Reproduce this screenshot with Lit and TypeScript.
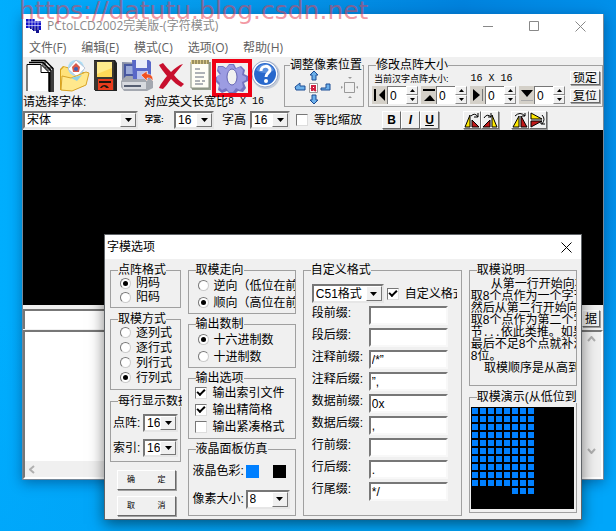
import { LitElement, html, css, svg, nothing } from "lit";
import { customElement } from "lit/decorators.js";

const toolIcons = [
  {
    name: "新建",
    art: svg`<path d="M2 3h15l9 8v21h-4V12H2z" fill="#eee"/><path d="M5 1.500h14l8 8V33M3 3.500h14l8 8V33" fill="none" stroke="#000" stroke-width="1.500"/><path d="M19 2v7h8M17 4v7h8" fill="none" stroke="#000"/><path d="M1 32V5.500h14l8 8V32z" fill="#fff"/><path d="M1 32V5.500h14l8 8V32M15 6v7.500h8" fill="none" stroke="#000"/><path d="M23.500 13v20" stroke="#000" stroke-width="2"/>`,
    w: 29,
  },
  {
    name: "打开",
    art: svg`<path d="M1 10l3-3 8 2 1 4h12v14L11 32 1 31z" fill="#d9a520"/><path d="M2 11l3-3 6 2 2 4h11v12L2 30z" fill="#ffe27a"/><circle cx="17" cy="9" r="8" fill="#a8dcf5"/><path d="M9 10l8-9 9 8-8 9z" fill="#fff" stroke="#b8c4d8"/><path d="M17 4l4 4-1 5h-6l-1-5z" fill="#d85a4a"/><circle cx="17" cy="10" r="2" fill="#3c62b8"/><path d="M2 31l1-14 9 2 15-6 3 1-3 12-14 6z" fill="#ffe88c" stroke="#d8a428"/><path d="M12 19l11-3-5 6z" fill="#8fd0e6"/>`,
    w: 31,
  },
  {
    name: "保存",
    art: svg`<path d="M0 1h21l2 3v28H1z" fill="#222"/><path d="M0 2h20v29H0z" fill="#3a3630"/><path d="M3 3h15v15H3z" fill="#ffd858"/><path d="M3 3h15v6L3 15z" fill="#ffeb8c"/><path d="M4 20h15v11H4z" fill="#e83c1c"/><path d="M5 22h12v2H5z" fill="#201810"/><path d="M6 29c2-4 7-4 9 0h-3c-1-2-3-2-4 0z" fill="#201810"/>`,
    w: 23,
  },
  {
    name: "全部保存",
    art: svg`<path d="M1 3l22 1v18H1z" fill="#8890a8"/><path d="M3 5h18v14H3z" fill="#4858a0"/><path d="M5 7h12v8H5z" fill="#9cabd8"/><path d="M0 22l5-5h24l3 5v7l-6 3H3l-3-4z" fill="#a4a8b0"/><path d="M1 23h24v7H2z" fill="#d8dadf"/><path d="M3 26h17v2H3z" fill="#555d70"/><path d="M11 1h17l2 2v17H12z" fill="#5968c8"/><path d="M15 1h11v8H15z" fill="#e8ecfa"/><path d="M16 12h11v8H16z" fill="#b8c2ec"/><path d="M20 16l6-4v3c4 0 6 2 6 7-2-3-3-3-6-3v3z" fill="#f05020" stroke="#fff" stroke-width=".5"/>`,
    w: 33,
  },
  {
    name: "删除",
    art: svg`<path d="M1 6l4-2c3 4 6 7 8 9 4-4 8-7 12-8l-9 11c3 4 6 6 10 9l-3 3c-4-2-7-5-10-8-3 4-5 7-8 10l-4-1c2-5 5-8 8-12C6 13 3 10 1 6z" fill="#c8102e"/>`,
    w: 28,
  },
  {
    name: "记事",
    art: svg`<path d="M2 3h19v28H2z" fill="#98a090"/><path d="M1 3h18v26H1z" fill="#fffef6" stroke="#889080"/><path d="M1 1h18v4H1z" fill="#d8c888"/><path d="M3 1v4M6 1v4M9 1v4M12 1v4M15 1v4M18 1v4" stroke="#605838"/><path d="M5 10h5M5 14h10M5 18h9M5 22h5M12 22h3M5 25h8" stroke="#606878"/>`,
    w: 21,
  },
];

const groupFields = [
  ["段前缀:", ""],
  ["段后缀:", ""],
  ["注释前缀:", "/*”"],
  ["注释后缀:", "”,"],
  ["数据前缀:", "0x"],
  ["数据后缀:", ","],
  ["行前缀:", ""],
  ["行后缀:", "."],
  ["行尾缀:", "*/"],
];

const spinners = [
  { name: "左", art: svg`<path d="M3 2v12" stroke="#000" stroke-width="2"/><path d="M13 2v12L7 8z" fill="#000"/>` },
  { name: "上", art: svg`<path d="M2 3h12" stroke="#000" stroke-width="2"/><path d="M3 14h11L9 8z" fill="#000"/>` },
  { name: "右", art: svg`<path d="M12.500 2v12" stroke="#777"/><path d="M3 2v12l7-6z" fill="#000"/>` },
  { name: "下", art: svg`<path d="M2 13.500h12" stroke="#aaa"/><path d="M2 3h12L8 10z" fill="#000"/>` },
];

@customElement("app-root")
export class AppRoot extends LitElement {
  static styles = css`
    :host {
      display: block;
      position: relative;
      min-height: 100vh;
      overflow: hidden;
      box-sizing: border-box;
      padding: 14px 12px 50px 22px;
      background: linear-gradient(170deg, transparent 50%, #00a6fa 92%),
        linear-gradient(90deg, #00aefe 0, #0599ea 35%, #0082dd 75%, #0090ea 100%);
      color: #000;
      font: 12px/12px "Liberation Sans", "Noto Sans CJK SC", sans-serif;
    }
    *, *::before { box-sizing: border-box; }
    svg { display: block; }
    button, input, select, textarea { font: inherit; color: inherit; margin: 0; padding: 0; border-radius: 0; }
    .watermark {
      position: absolute;
      left: 19px;
      top: 0;
      z-index: 3;
      font: 25px/22px "DejaVu Sans", sans-serif;
      color: rgba(232, 64, 84, 0.55);
      white-space: nowrap;
    }
    .window { background: #f0f0f0; border: 1px solid #74889a; border-top: 0; box-shadow: 0 3px 12px rgba(0, 20, 60, 0.4); }
    .titlebar { display: flex; align-items: center; background: #fff; height: 24px; padding-left: 2px; color: #8a8a8a; }
    .caption { flex: 1; margin: 0; padding-left: 5px; font: 12px/16px "Open Sans", "Noto Sans CJK SC", sans-serif; }
    .winbtn { width: 46px; height: 24px; border: 0; background: none; display: grid; place-items: center; }
    .menubar { display: flex; gap: 15px; background: #fff; height: 19px; padding-left: 6px; }
    .menubar a { color: #606060; text-decoration: none; font: 12px/20px "Open Sans", "Noto Sans CJK SC", sans-serif; }

    .upper { display: grid; grid-template-columns: 257px 80px 1fr; column-gap: 4px; height: 52px; padding-top: 2px; }
    .icons { display: flex; align-items: flex-start; gap: 4px; padding-left: 3px; height: 36px; }
    .tool { border: 0; background: none; flex: none; }
    .tool.marked { outline: 4px solid #f00014; outline-offset: -4px; padding: 3px; margin-left: -3px; }
    .help { margin-left: -4px; }
    .labels { display: flex; line-height: 14px; height: 14px; white-space: nowrap; }
    .fontlabel { width: 121px; }
    .ratio { width: 84px; overflow: hidden; }
    .mono { font-family: "Liberation Mono", monospace; font-size: 10px; }
    fieldset { min-width: 0; margin: 0; padding: 0; border: 1px solid #a0a0a0; }
    legend { margin-left: 7px; padding: 0; line-height: 12px; height: 12px; white-space: nowrap; }
    .upper fieldset { height: 48px; }
    .shift { display: flex; align-items: flex-start; padding-left: 9px; gap: 7px; }
    .upper .adjust legend { margin-left: 5px; }
    .sizebody { display: flex; justify-content: space-between; padding: 0 2px 0 3px; }
    .sizeline { display: flex; gap: 22px; height: 15px; padding-left: 2px; align-items: center; font-size: 9px; white-space: nowrap; }
    .spins { display: flex; gap: 3px; }
    .spin { display: flex; height: 18px; }
    .spin .dir { width: 15px; background: #d4d0c8; border: 0; }
    .spin input { width: 19px; border: 1px solid #777; border-width: 1px 0 0 1px; background: #fff; padding-left: 2px; outline: 0; }
    .updown { display: grid; grid-template-rows: 1fr 1fr; width: 12px; }
    .updown button { border: 1px solid; border-color: #fff #888 #888 #fff; background: #f0f0f0; display: grid; place-items: center; }
    .pair { display: flex; flex-direction: column; gap: 4px; width: 30px; }
    .raised { background: #f0f0f0; border: 1px solid; border-color: #fff #696969 #696969 #fff; box-shadow: 1px 1px 0 #a0a0a0; white-space: nowrap; overflow: hidden; }
    .pair .raised { height: 14px; line-height: 12px; }
    .lower { display: flex; align-items: center; height: 21px; white-space: nowrap; }
    .tiny { font-size: 8px; font-weight: bold; width: 36px; padding-left: 7px; }
    .mid { width: 36px; padding-left: 8px; }
    .combo { display: inline-grid; grid-template-columns: 1fr 16px; height: 18px; border: 2px solid; border-color: #777 #e6e6e6 #e6e6e6 #777; background: #fff; flex: none; }
    .combo select { grid-area: 1 / 1 / 2 / 3; appearance: none; border: 0; background: transparent; padding-left: 2px; outline: 0; width: 100%; line-height: 14px; }
    .combo span { grid-area: 1 / 2; background: #f0f0f0; border: 1px solid; border-color: #fff #777 #777 #fff; display: grid; place-items: center; pointer-events: none; }
    .c-font { width: 115px; }
    .c-num { width: 40px; }
    .c-cell { width: 35px; }
    .c-fmt { width: 72px; height: 19px; }
    .c-px { width: 44px; height: 19px; }
    .check { display: flex; align-items: center; min-width: 0; overflow: hidden; white-space: nowrap; }
    .check input { appearance: none; flex: none; width: 12px; height: 12px; border: 1px solid; border-color: #777 #ddd #ddd #777; background: #fff; display: grid; place-items: center; margin-right: 6px; }
    .check input:checked::before { content: ""; width: 8px; height: 5px; border: 2px solid #000; border-width: 0 0 2px 2px; transform: rotate(-45deg); margin-bottom: 2px; }
    .lower .check { margin-left: 6px; width: 86px; }
    .biu { display: flex; }
    .biu button { width: 19px; height: 18px; font: bold 12px/14px "Liberation Sans", sans-serif; }
    .flips { display: flex; gap: 12px; margin-left: 24px; }
    .flips div { display: flex; }
    .flips button { width: 18px; height: 18px; }

    .canvas { height: 175px; background: #000; }
    .inputrow { display: flex; height: 20px; margin-top: 4px; }
    .inputrow input { flex: 1; min-width: 0; border: 1px solid #777; border-width: 2px 0 0 2px; background: #fff; outline: 0; }
    .inputrow button { width: 18px; margin: 1px 3px 2px 0; }
    .editor { display: grid; grid-template: 129px 16px / 1fr 20px; border: 2px solid; border-color: #777 #fff #fff #777; margin-top: 1px; }
    .editor textarea { border: 0; resize: none; background: #fff; outline: 0; display: block; width: 100%; height: 100%; }
    .vbar { display: flex; flex-direction: column; justify-content: space-between; align-items: center; padding: 4px 0 7px; }
    .hbar { display: flex; align-items: center; padding-left: 4px; }

    .dialog { position: absolute; left: 104px; right: 34px; top: 234px; z-index: 2; background: #f0f0f0; border: 1px solid #606468; box-shadow: 0 4px 14px rgba(0, 0, 0, 0.5); }
    .dtitle { display: flex; align-items: center; justify-content: space-between; height: 24px; background: #fff; padding-left: 2px; }
    .dtitle h2 { margin: 0; font: 12px/16px "Open Sans", "Noto Sans CJK SC", sans-serif; }
    .dtitle button { width: 30px; height: 24px; border: 0; background: none; display: grid; place-items: center; }
    .cols { display: grid; grid-template-columns: 71fr 109fr 160fr 109fr; gap: 7px; padding: 5px 4px 3px 5px; }
    .col { display: flex; flex-direction: column; min-width: 0; }
    .grp { display: flex; flex-direction: column; overflow: hidden; }
    .radio { display: flex; align-items: center; padding-left: 9px; white-space: nowrap; }
    .radio input { appearance: none; flex: none; width: 11px; height: 11px; border: 1px solid; border-color: #777 #ccc #ccc #777; border-radius: 50%; background: #fff; display: grid; place-items: center; margin-right: 5px; }
    .radio input:checked::before { content: ""; width: 5px; height: 5px; border-radius: 50%; background: #000; }
    .h14 > * { height: 14px; }
    .h15 > * { height: 15px; }
    .h17 > * { height: 17px; }
    .h14 { padding-bottom: 3px; }
    .h15 { padding-bottom: 4px; }
    .h17 { padding: 1px 0 2px; }
    .flat { padding: 0 0 3px; }
    .flat .check { padding-left: 6px; }
    .gap5 { gap: 5px; }
    .gap4 { gap: 4px; }
    .cut { overflow: hidden; width: 64px; }
    .cells { display: flex; flex-direction: column; gap: 7px; padding: 7px 0 4px 2px; }
    .cells label { display: flex; align-items: center; white-space: nowrap; }
    .cells label span:first-child { width: 30px; }
    .ok { display: flex; flex-direction: column; gap: 6px; padding: 3px 5px 0 7px; }
    .ok button { height: 20px; font-size: 8px; display: flex; justify-content: space-between; align-items: center; padding: 0 9px; }
    .lcd { display: flex; flex-direction: column; gap: 10px; padding: 7px 0 7px 4px; }
    .lcd > * { display: flex; align-items: center; height: 18px; white-space: nowrap; }
    .lcd .name { width: 53px; flex: none; }
    .swatch { width: 13px; height: 13px; flex: none; border: 0; margin-right: 14px; }
    .azure { background: #0080ff; }
    .black { background: #000; margin-right: 0; }
    .custom { padding: 8px 4px 11px 8px; }
    .fmt { display: flex; gap: 3px; margin-bottom: 3px; }
    .field { display: grid; grid-template-columns: 57px 79px; height: 22px; align-items: start; line-height: 14px; }
    .field input { height: 19px; width: 100%; border: 2px solid; border-color: #777 #f8f8f8 #f8f8f8 #777; background: #fff; outline: 0; padding-left: 1px; }
    .desc { height: 109px; padding: 2px 0 0 1px; overflow: hidden; white-space: pre; margin: 0; }
    .desc .mono { line-height: 1px; }
    .demo { margin: 4px 2px 3px 1px; height: 102px; background: #000; display: grid; grid-template-columns: repeat(8, 6px); grid-auto-rows: 6px; gap: 2px; padding: 1px; align-content: start; }
    .on { background: #0080ff; }
  `;

  arrow() {
    return html`<span aria-hidden="true"><svg width="7" height="4"><path d="M0 0h7L3.500 4z" /></svg></span>`;
  }

  combo(cls: string, value: string, label: string) {
    return html`<div class="combo ${cls}"><select aria-label=${label}><option>${value}</option></select>${this.arrow()}</div>`;
  }

  radios(group: string, cls: string, items: string[], on: number) {
    return html`<div class="grp ${cls}">
      ${items.map((t, i) => html`<label class="radio"><input type="radio" name=${group} ?checked=${i === on} />${t}</label>`)}
    </div>`;
  }

  check(text: string, on: boolean) {
    return html`<label class="check"><input type="checkbox" ?checked=${on} />${text}</label>`;
  }

  toolbar() {
    return html`
      <div class="upper">
        <div>
          <div class="icons">
            ${toolIcons.map((t) => html`<button class="tool" aria-label=${t.name}><svg width=${t.w} height="33">${t.art}</svg></button>`)}
            <button class="tool marked" aria-label="选项">
              <svg width="34" height="32">
                <path d="M3 4h5l3 2 3-4h5l2 4 5-2 4 4-1 4 4 2v5l-4 2 2 5-3 4-5-1-3 3h-5l-3-3-5 2-4-3 1-5-3-3v-5l4-2-3-4z" fill="#7474c0" />
                <path d="M4 5h4l3 2 3-4h4l2 4 5-2 3 3-1 5 4 2v3l-4 2 1 5-3 3-4-2-3 4h-4l-3-4-4 2-3-3 1-4-3-3v-4l4-2-3-5z" fill="#9c9ce2" />
                <ellipse cx="17" cy="15" rx="5" ry="8" fill="#f0f0f0" stroke="#6464b4" />
              </svg>
            </button>
            <button class="tool help" aria-label="帮助">
              <svg width="28" height="32">
                <circle cx="14" cy="16" r="14" fill="#c4ccd8" /><circle cx="13" cy="15" r="13" fill="#fff" stroke="#98a8c8" />
                <circle cx="13" cy="15" r="11" fill="#2868cc" /><path d="M4 11a10 10 0 0 1 18 0c-4 4-13 4-18 0z" fill="#5a90e0" />
                <path d="M9 12c0-6 9-6 9-1 0 3-4 3-4 7" fill="none" stroke="#fff" stroke-width="3" /><circle cx="14" cy="22" r="2" fill="#fff" />
              </svg>
            </button>
          </div>
          <div class="labels"><span class="fontlabel">请选择字体:</span><span class="ratio">对应英文长宽比</span><span class="mono">8 X 16</span></div>
        </div>
        <fieldset class="adjust">
          <legend>调整像素位置</legend>
          <div class="shift">
            <svg width="40" height="34">
              <g fill="#6cb0ea" stroke="#1c4c94">
                <path d="M18 9V4h-2l4-4 4 4h-2v5z" /><path d="M18 24v5h-2l4 4 4-4h-2v-5z" />
                <path d="M11 19v-4H6v-3l-5 4 1 3z" /><path d="M27 19v-2h5v-4h4v6z" />
              </g>
              <path d="M15.500 12.500h8v9h-8z" fill="#fff" stroke="#999" /><path d="M18 20v-5h3v3h-2l3 2" fill="none" stroke="#d02040" stroke-width="2" />
            </svg>
            <svg width="20" height="28">
              <path d="M3.500 11.500h10v10h-10z" fill="none" stroke="#999" /><path d="M7 6h4l-2 2zM7 27h4l-2-2zM0 15v3l2-2zM17 15v3l-2-2z" fill="#999" />
            </svg>
          </div>
        </fieldset>
        <fieldset>
          <legend>修改点阵大小</legend>
          <div class="sizebody">
            <div>
              <div class="sizeline"><span>当前汉字点阵大小:</span><span class="mono">16 X 16</span></div>
              <div class="spins">
                ${spinners.map(
                  (s) => html`<div class="spin">
                    <button class="dir" aria-label=${s.name}><svg width="15" height="16">${s.art}</svg></button>
                    <input aria-label=${s.name} value="0" />
                    <div class="updown">
                      <button aria-label="加"><svg width="5" height="3"><path d="M0 3h5L2.500 0z" /></svg></button>
                      <button aria-label="减"><svg width="5" height="3"><path d="M0 0h5L2.500 3z" /></svg></button>
                    </div>
                  </div>`
                )}
              </div>
            </div>
            <div class="pair"><button class="raised">锁定</button><button class="raised">复位</button></div>
          </div>
        </fieldset>
      </div>
      <div class="lower">
        ${this.combo("c-font", "宋体", "请选择字体")}
        <span class="tiny">字宽:</span>${this.combo("c-num", "16", "字宽")}
        <span class="mid">字高</span>${this.combo("c-num", "16", "字高")}
        ${this.check("等比缩放", false)}
        <div class="biu"><button class="raised">B</button><button class="raised"><i>I</i></button><button class="raised"><u>U</u></button></div>
        <div class="flips">
          <div>
            <button class="raised" aria-label="左转"><svg width="16" height="16"><path d="M1 15L6 3v12z" fill="#ffe800" stroke="#000" /><path d="M8 15V8l7 7z" fill="#c01818" stroke="#000" /><path d="M7 4q4-4 7 1M14 1v4h-4" fill="none" stroke="#000" /></svg></button>
            <button class="raised" aria-label="右转"><svg width="16" height="16"><path d="M1 15l7-7v7z" fill="#c01818" stroke="#000" /><path d="M10 3v12h5z" fill="#ffe800" stroke="#000" /><path d="M2 6q3-5 7-1M9 1v4H6" fill="none" stroke="#000" /></svg></button>
          </div>
          <div>
            <button class="raised" aria-label="水平翻转"><svg width="16" height="16"><path d="M1 15L7 4v11z" fill="#ffe800" stroke="#000" /><path d="M9 4v11h6z" fill="#c01818" stroke="#000" /><path d="M3 4q5-5 10 0M13 1v3h-3" fill="none" stroke="#000" /></svg></button>
            <button class="raised" aria-label="垂直翻转"><svg width="16" height="16"><path d="M1 1v6h11z" fill="#ffe800" stroke="#000" /><path d="M1 15V9h11z" fill="#c01818" stroke="#000" /><path d="M12 3q4 4 0 9M15 12h-4V9" fill="none" stroke="#000" /></svg></button>
          </div>
        </div>
      </div>
    `;
  }

  dialog() {
    return html`<section class="dialog" role="dialog" aria-label="字模选项">
      <div class="dtitle">
        <h2>字模选项</h2>
        <button aria-label="关闭"><svg width="11" height="11"><path d="M.5.5l10 10M10.500.5l-10 10" stroke="#000" fill="none" /></svg></button>
      </div>
      <div class="cols">
        <div class="col gap5">
          <fieldset><legend>点阵格式</legend>${this.radios("code", "h14", ["阴码", "阳码"], 0)}</fieldset>
          <fieldset><legend>取模方式</legend>${this.radios("scan", "h15", ["逐列式", "逐行式", "列行式", "行列式"], 3)}</fieldset>
          <fieldset>
            <legend class="cut">每行显示数据</legend>
            <div class="cells">
              <label><span>点阵:</span>${this.combo("c-cell", "16", "点阵")}</label>
              <label><span>索引:</span>${this.combo("c-cell", "16", "索引")}</label>
            </div>
          </fieldset>
          <div class="ok">
            <button class="raised"><span>确</span><span>定</span></button>
            <button class="raised"><span>取</span><span>消</span></button>
          </div>
        </div>
        <div class="col gap4">
          <fieldset><legend>取模走向</legend>${this.radios("dir", "h17", ["逆向（低位在前", "顺向（高位在前"], 1)}</fieldset>
          <fieldset><legend>输出数制</legend>${this.radios("base", "h17", ["十六进制数", "十进制数"], 0)}</fieldset>
          <fieldset>
            <legend>输出选项</legend>
            <div class="grp h17 flat">
              ${this.check("输出索引文件", true)}${this.check("输出精简格", true)}${this.check("输出紧凑格式", false)}
            </div>
          </fieldset>
          <fieldset>
            <legend>液晶面板仿真</legend>
            <div class="lcd">
              <div><span class="name">液晶色彩:</span><button class="swatch azure" aria-label="前景"></button><button class="swatch black" aria-label="背景"></button></div>
              <div><span class="name">像素大小:</span>${this.combo("c-px", "8", "像素大小")}</div>
            </div>
          </fieldset>
        </div>
        <div class="col">
          <fieldset>
            <legend>自定义格式</legend>
            <div class="custom">
              <div class="fmt">${this.combo("c-fmt", "C51格式", "格式")}${this.check("自定义格式", true)}</div>
              ${groupFields.map(([l, v]) => html`<label class="field"><span>${l}</span><input .value=${v} /></label>`)}
            </div>
          </fieldset>
        </div>
        <div class="col gap5">
          <fieldset>
            <legend>取模说明</legend>
            <p class="desc">${"      从第一行开始向右\n取8个点作为一个字节\n然后从第二行开始向右\n取8个点作为第二个字\n节"}<span class="mono">...</span>${"依此类推。如果\n最后不足8个点就补满\n8位。\n    取模顺序是从高到低"}</p>
          </fieldset>
          <fieldset>
            <legend>取模演示(从低位到</legend>
            <div class="demo">
              ${Array.from({ length: 88 }, (_, i) => html`<span class=${i < 80 || i > 84 ? "on" : nothing}></span>`)}
            </div>
          </fieldset>
        </div>
      </div>
    </section>`;
  }

  render() {
    return html`
      <div class="watermark">https://datutu.blog.csdn.net</div>
      <main class="window">
        <div class="titlebar">
          <svg width="17" height="16">
            <path d="M1 1h9v9H1z" fill="#1010c8" /><path d="M7 3h9v9H7z" fill="#1010c8" /><path d="M5 9h9v6h-3v-2H8v-2H5z" fill="#101090" />
            <path d="M4 1v9M1 4h15M1 7.500h15M10 1v13M13 3v9M7 1v10" stroke="#fff" stroke-width=".6" />
          </svg>
          <h1 class="caption">PCtoLCD2002完美版-(字符模式)</h1>
          <button class="winbtn" aria-label="最小化"><svg width="10" height="10"><path d="M0 5.500h10" stroke="#888" /></svg></button>
          <button class="winbtn" aria-label="最大化"><svg width="10" height="10"><path d="M.5.5h9v9h-9z" fill="none" stroke="#888" /></svg></button>
          <button class="winbtn" aria-label="关闭"><svg width="11" height="11"><path d="M.5.5l10 10M10.500.5l-10 10" stroke="#888" /></svg></button>
        </div>
        <nav class="menubar">
          ${["文件(F)", "编辑(E)", "模式(C)", "选项(O)", "帮助(H)"].map((m) => html`<a href="#">${m}</a>`)}
        </nav>
        ${this.toolbar()}
        <div class="canvas"></div>
        <div class="inputrow"><input aria-label="文字" /><button class="raised">据</button></div>
        <div class="editor">
          <textarea aria-label="输出"></textarea>
          <div class="vbar">
            <svg width="9" height="6"><path d="M1 5l3.500-4L8 5" fill="none" stroke="#b0b0b0" stroke-width="2" /></svg>
            <svg width="9" height="6"><path d="M1 1l3.500 4L8 1" fill="none" stroke="#b0b0b0" stroke-width="2" /></svg>
          </div>
          <div class="hbar"><svg width="6" height="9"><path d="M5 1L1 4.500 5 8" fill="none" stroke="#b0b0b0" stroke-width="2" /></svg></div>
        </div>
      </main>
      ${this.dialog()}
    `;
  }
}
